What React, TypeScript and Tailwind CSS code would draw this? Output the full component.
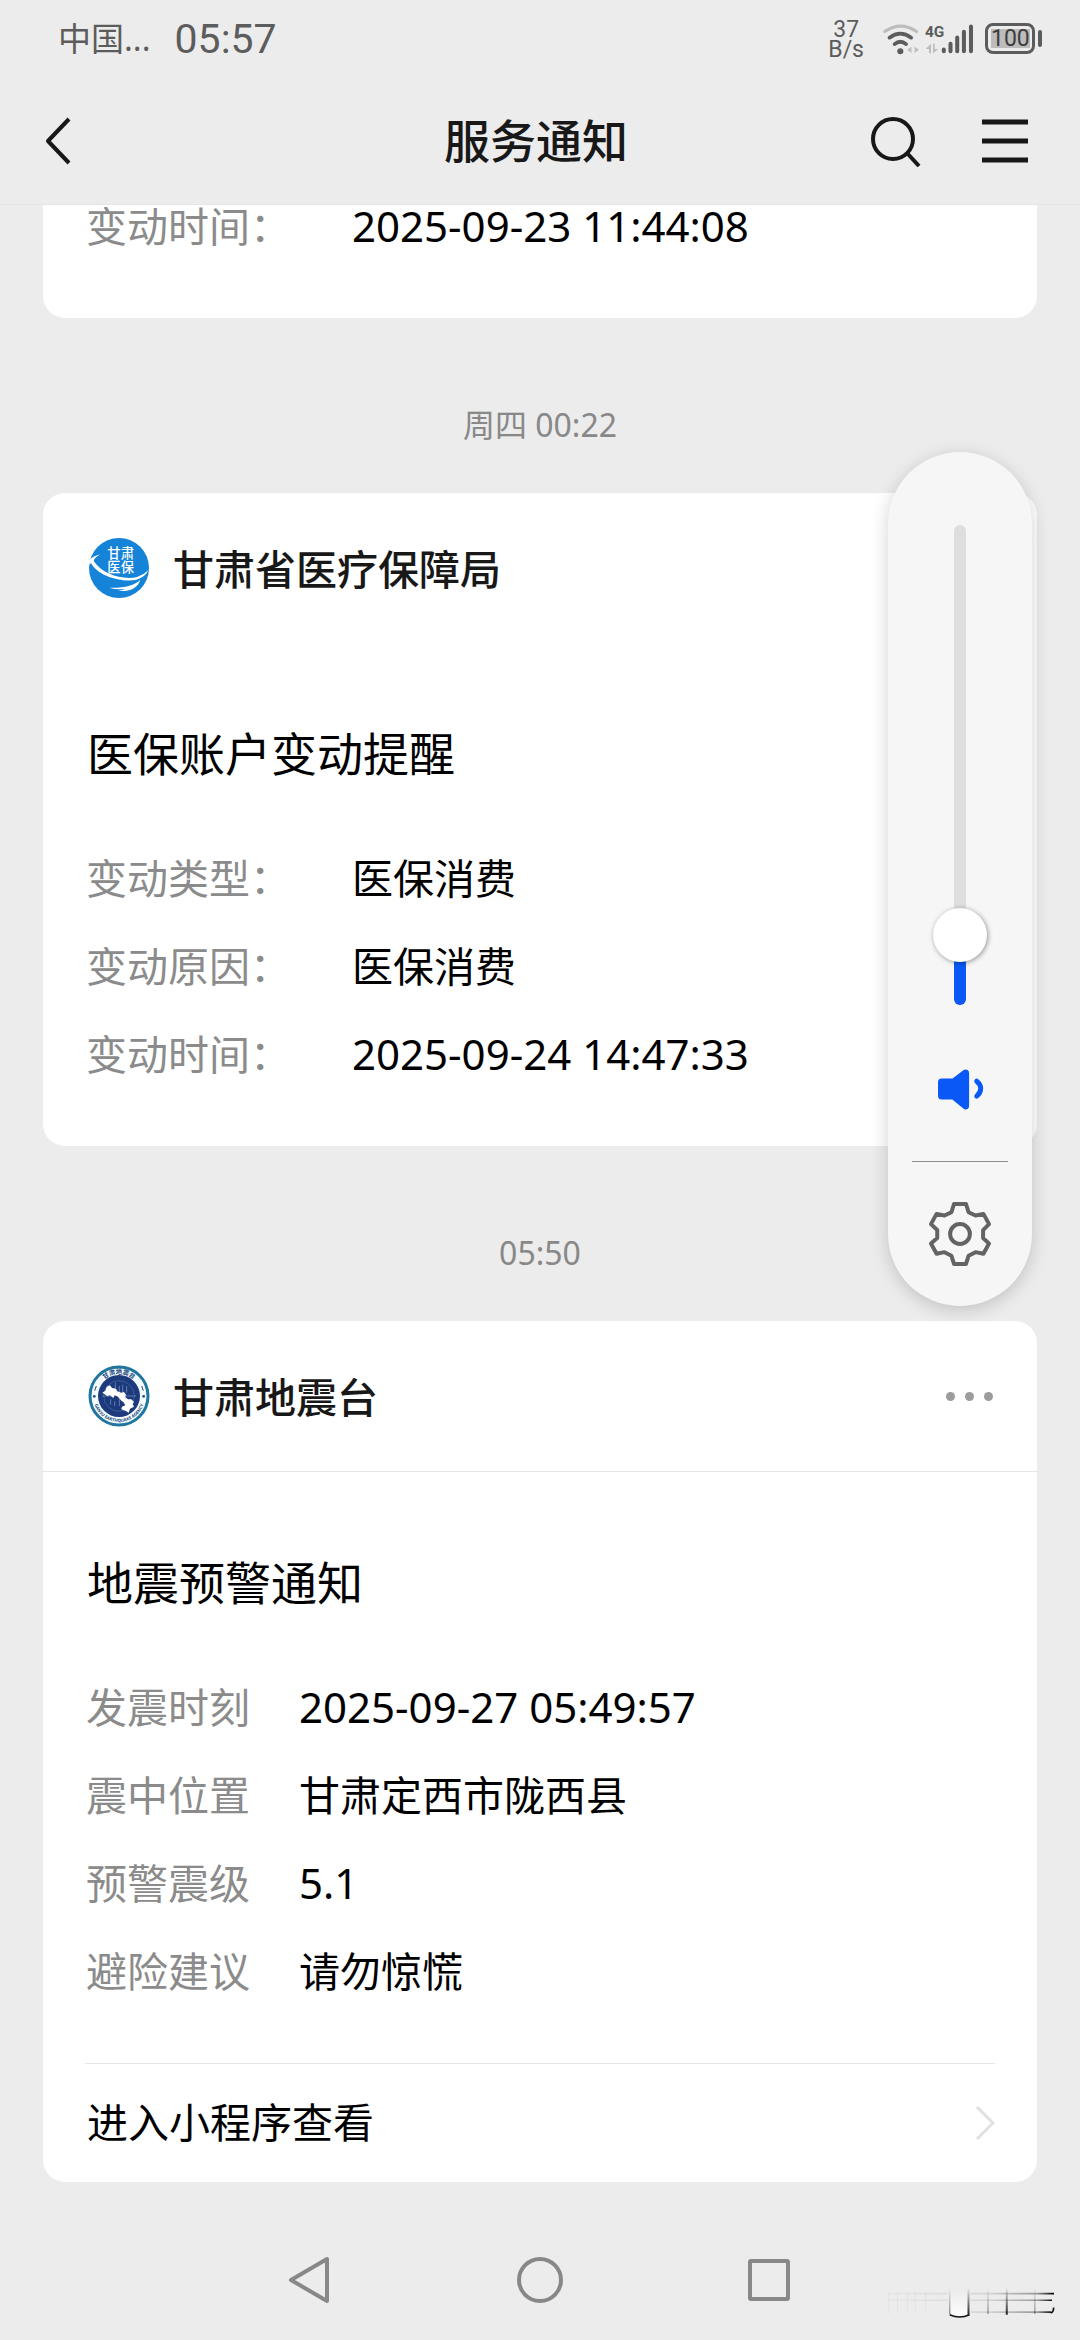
import { useState, type ReactNode } from "react";

type Field = { label: string; value: string; numeric?: boolean };

const sans = "font-['Noto_Sans','Noto_Sans_CJK_SC',sans-serif]";

function WifiIcon() {
  return (
    <svg viewBox="240 60 112 100" className="h-[34px] w-[38px]" fill="none" strokeLinecap="round" aria-label="Wi-Fi">
      <path d="M248 88Q295 56 342 88" stroke="#bdbdbd" strokeWidth="9" />
      <path d="M262 106Q294 82 326 106" stroke="#5c5c5c" strokeWidth="11" />
      <path d="M277 125Q294 111 311 125" stroke="#5c5c5c" strokeWidth="11" />
      <circle cx="294" cy="146" r="9" fill="#5c5c5c" />
      <path d="M327 133V151L314 142ZM336 133V151L349 142Z" fill="#bdbdbd" />
    </svg>
  );
}

function SignalIcon() {
  return (
    <svg viewBox="372 64 146 92" className="h-[31px] w-[49px] overflow-visible" strokeLinecap="round" aria-label="4G">
      <text x="372" y="106" fontSize="46" fontWeight="700" fill="#5c5c5c" fontFamily="Roboto, sans-serif">
        4G
      </text>
      <path d="M390 125V154H384V141H374ZM396 154V125H401V141H412Z" fill="#bdbdbd" />
      <g stroke="#5c5c5c" strokeWidth="12">
        <path d="M428 143V148M448 126V148M468 107V148M488 90V148M509 74V148" />
      </g>
    </svg>
  );
}

function Battery() {
  return (
    <div className="flex items-center gap-[3px]">
      <div className="flex h-[31px] w-[50px] rounded-[8px] border-[3px] border-[#5c5c5c] p-[3px]">
        <span className="flex flex-1 items-center justify-center bg-[#bcbcbc] font-[Roboto,sans-serif] text-[23px] leading-none text-[#3d3d3d]">
          100
        </span>
      </div>
      <div className="h-[17px] w-[4px] rounded-full bg-[#5c5c5c]" />
    </div>
  );
}

function StatusBar() {
  return (
    <div className="flex h-[77px] items-center justify-between pr-[38px] pl-[58px] text-[#5c5c5c]">
      <div className="flex items-center gap-[24px]">
        <span className="text-[33px]">中国...</span>
        <span className="pt-[2px] font-[Roboto,sans-serif] text-[41px]">05:57</span>
      </div>
      <div className="flex items-center">
        <div className="mr-[18px] pt-[2px] text-center font-[Roboto,sans-serif] text-[23px] leading-[20px]">
          37
          <br />
          B/s
        </div>
        <WifiIcon />
        <div className="ml-[5px]">
          <SignalIcon />
        </div>
        <div className="ml-[11px]">
          <Battery />
        </div>
      </div>
    </div>
  );
}

function TitleBar() {
  return (
    <div className="grid h-[127px] grid-cols-3 items-center pr-[52px] pl-[44px] text-[#181818]">
      <button aria-label="返回" className="justify-self-start">
        <svg viewBox="0 0 28 48" className="h-[48px] w-[28px]" fill="none" stroke="currentColor" strokeWidth="4">
          <path d="M25 2L4 24L25 46" strokeLinejoin="round" />
        </svg>
      </button>
      <h1 className="text-center text-[46px] font-medium">服务通知</h1>
      <div className="flex items-center justify-end gap-[60px]">
        <button aria-label="搜索">
          <svg viewBox="0 0 52 52" className="size-[52px]" fill="none" stroke="currentColor" strokeWidth="4">
            <circle cx="23" cy="24" r="20" />
            <path d="M37 38L49 51" />
          </svg>
        </button>
        <button aria-label="菜单">
          <svg viewBox="0 0 46 46" className="size-[46px]" fill="none" stroke="currentColor" strokeWidth="5">
            <path d="M0 4H46M0 23H46M0 42H46" />
          </svg>
        </button>
      </div>
    </div>
  );
}

function InsuranceLogo() {
  return (
    <svg viewBox="22 17 192 192" className="size-[64px]" aria-hidden="true">
      <circle cx="118" cy="113" r="90" fill="#1583d8" />
      <g fill="#fff">
        <text x="83" y="83" fontSize="40" fontWeight="500">甘肃</text>
        <text x="83" y="126" fontSize="40" fontWeight="500">医保</text>
        <path d="M28 90Q38 78 62 72Q44 82 42 92C68 132 130 150 172 140Q192 134 206 120Q196 142 168 149C120 156 54 136 34 98L30 104Z" />
        <path d="M88 172C130 174 164 166 182 148C174 174 150 184 116 182Q134 178 136 176Q108 178 88 172Z" />
      </g>
    </svg>
  );
}

function QuakeLogo() {
  return (
    <svg viewBox="21 26 192 192" className="size-[64px]" aria-hidden="true">
      <defs>
        <path id="arc-top" d="M51 122A66 66 0 0 1 183 122" />
        <path id="arc-bottom" d="M39 122A78 78 0 0 0 195 122" />
      </defs>
      <circle cx="117" cy="122" r="87" fill="#f4fbff" stroke="#20769f" strokeWidth="9" />
      <circle cx="117" cy="122" r="63" fill="#1c3a7c" />
      <circle cx="117" cy="122" r="46" fill="none" stroke="#4a6aa6" strokeWidth="2" />
      <path d="M66 122H96M138 122H168M106 82V108M118 92V152M128 88V112M140 92V112M92 132V148M104 138V152" stroke="#5f7cb4" strokeWidth="3" />
      <path
        d="M67 112L76 106L80 94L90 90L96 98L108 100L112 108L124 112L132 110L138 118L136 126L144 132L154 132L162 140L158 146L162 154L150 160L146 172L136 166L124 162L126 154L136 150L130 140L124 136L114 124L104 120L100 128L90 120L82 122Z"
        fill="#fff"
      />
      <g fill="#1d4a7c" textAnchor="middle" fontWeight="700">
        <text fontSize="19">
          <textPath href="#arc-top" startOffset="50%">甘肃地震台</textPath>
        </text>
        <text fontSize="13">
          <textPath href="#arc-bottom" startOffset="50%">GANSU EARTHQUAKE AGENCY</textPath>
        </text>
      </g>
      <path d="M49 92L44 106M185 92L190 106" stroke="#1d4a7c" strokeWidth="3" />
      <circle cx="43" cy="123" r="4" fill="#1d4a7c" />
      <circle cx="191" cy="123" r="4" fill="#1d4a7c" />
    </svg>
  );
}

function Fields({ items, gap }: { items: Field[]; gap: string }) {
  return (
    <dl className="px-[43px] pb-[48px] text-[41px] leading-[88px]">
      {items.map((item) => (
        <div key={item.label} className={`flex h-[88px] ${gap}`}>
          <dt className="text-[#8b8b8b]">{item.label}</dt>
          <dd className={item.numeric ? "text-[42px] text-black" : "text-black"}>{item.value}</dd>
        </div>
      ))}
    </dl>
  );
}

function CardHeader({ logo, name, children }: { logo: ReactNode; name: string; children?: ReactNode }) {
  return (
    <header className="flex h-[150px] items-center gap-[22px] px-[44px]">
      {logo}
      <h2 className="flex-1 pt-[4px] text-[41px] font-medium text-[#181818]">{name}</h2>
      {children}
    </header>
  );
}

function CardTitle({ children }: { children: ReactNode }) {
  return <h3 className="px-[44px] pt-[78px] pb-[49px] text-[46px] leading-[64px] text-black">{children}</h3>;
}

function Timestamp({ children }: { children: ReactNode }) {
  return <p className="flex h-[175px] items-center justify-center pt-[38px] text-[32px] text-[#888888]">{children}</p>;
}

function VolumePanel() {
  const [volume, setVolume] = useState(10);
  const filled = Math.round(((27 + (426 * volume) / 100) / 480) * 100);
  return (
    <aside className="absolute top-[452px] right-[48px] flex w-[144px] flex-col items-center rounded-[72px] bg-[#f6f6f6] pt-[73px] pb-[39px] shadow-[0_4px_18px_rgba(0,0,0,0.18)]">
      <div className="relative flex h-[480px] w-[54px] justify-center">
        <div className="flex w-[12px] flex-col justify-end overflow-hidden rounded-full bg-[#dedede]">
          <div className="bg-[#0a59f7]" style={{ height: `${filled}%` }} />
        </div>
        <input
          type="range"
          aria-label="音量"
          min={0}
          max={100}
          value={volume}
          onChange={(e) => setVolume(Number(e.target.value))}
          className="absolute inset-0 h-full w-full appearance-none bg-transparent [direction:rtl] [writing-mode:vertical-lr] [&::-webkit-slider-thumb]:size-[54px] [&::-webkit-slider-thumb]:appearance-none [&::-webkit-slider-thumb]:rounded-full [&::-webkit-slider-thumb]:bg-white [&::-webkit-slider-thumb]:shadow-[1px_1px_5px_rgba(0,0,0,0.4)]"
        />
      </div>
      <button aria-label="静音" className="mt-[63px]">
        <svg viewBox="230 566 142 128" className="h-[43px] w-[47px]" fill="none" stroke="#0a59f7" strokeLinecap="round" strokeLinejoin="round">
          <path
            d="M244 604H279L315 577Q320 575 320 580V680Q320 685 315 683L279 653H244Q240 653 240 649V608Q240 604 244 604Z"
            fill="#0a59f7"
            strokeWidth="14"
          />
          <path d="M350 605Q362 614 362 627Q362 640 350 650" strokeWidth="15" />
        </svg>
      </button>
      <hr className="mt-[50px] w-[96px] border-t border-[#8e8e8e]" />
      <button aria-label="设置" className="mt-[39px]">
        <svg viewBox="203 962 192 200" className="h-[66px] w-[64px]" fill="none" stroke="#636363" strokeWidth="12" strokeLinejoin="round">
          <path d="M281 971H317L325 996L346 1006L370 1001L387 1032L369 1050V1074L387 1091L370 1122L346 1117L325 1128L317 1153H281L273 1128L252 1117L228 1122L211 1091L230 1074V1050L211 1032L228 1001L252 1006L273 996Z" />
          <circle cx="299" cy="1062" r="30" />
        </svg>
      </button>
    </aside>
  );
}

function NavBar() {
  return (
    <nav className="relative grid h-[158px] grid-cols-3 justify-items-center px-[195px] pt-[73px] text-[#888888]">
      <button aria-label="返回" className="size-[50px]">
        <svg viewBox="0 0 50 50" fill="none" stroke="currentColor" strokeWidth="4" strokeLinejoin="round">
          <path d="M42 4V46L6 25Z" />
        </svg>
      </button>
      <button aria-label="主屏幕" className="size-[50px]">
        <svg viewBox="0 0 50 50" fill="none" stroke="currentColor" strokeWidth="4">
          <circle cx="25" cy="25" r="21" />
        </svg>
      </button>
      <button aria-label="最近任务" className="size-[50px]">
        <svg viewBox="0 0 50 50" fill="none" stroke="currentColor" strokeWidth="4" strokeLinejoin="round">
          <rect x="5" y="6" width="38" height="38" rx="1" />
        </svg>
      </button>
      <svg viewBox="60 50 530 100" className="absolute right-[23px] bottom-[20px] h-[33px] w-[177px]" fill="none" aria-hidden="true">
        <defs>
          <linearGradient id="streak" gradientUnits="userSpaceOnUse" x1="80" y1="0" x2="584" y2="0">
            <stop offset="0" stopColor="#000" stopOpacity="0.02" />
            <stop offset="0.6" stopColor="#000" stopOpacity="0.1" />
            <stop offset="0.9" stopColor="#000" stopOpacity="0.35" />
            <stop offset="1" stopColor="#000" />
          </linearGradient>
          <linearGradient id="stem" gradientUnits="userSpaceOnUse" x1="0" y1="52" x2="0" y2="134">
            <stop offset="0" stopColor="#000" stopOpacity="0" />
            <stop offset="1" stopColor="#000" stopOpacity="0.85" />
          </linearGradient>
          <linearGradient id="glow" gradientUnits="userSpaceOnUse" x1="0" y1="60" x2="0" y2="130">
            <stop offset="0" stopColor="#fff" stopOpacity="0" />
            <stop offset="1" stopColor="#fff" stopOpacity="0.8" />
          </linearGradient>
        </defs>
        <path d="M272 60H322V134Q298 142 272 134Z" fill="url(#glow)" />
        <path d="M80 70H262M332 70H584M80 90H262M332 90H578M332 126H575" stroke="url(#streak)" strokeWidth="5" />
        <path d="M268 54V132M384 54V132M526 54V132" stroke="url(#stem)" strokeWidth="4" opacity="0.5" />
        <path d="M325 54V134M441 54V134" stroke="url(#stem)" strokeWidth="6" />
        <path d="M268 134Q298 148 328 134" stroke="#111" strokeWidth="5" />
        <path d="M583 112Q583 126 574 129" stroke="#111" strokeWidth="5" />
        <path d="M84 66V130M110 66V130M140 66V130M164 66V130M195 66V130" stroke="#000" strokeOpacity="0.03" strokeWidth="4" />
      </svg>
    </nav>
  );
}

export default function App() {
  return (
    <div className={`relative flex min-h-screen flex-col bg-[#ececec] ${sans}`}>
      <div className="border-b border-[#e5e5e5]">
        <StatusBar />
        <TitleBar />
      </div>

      <main className="flex-1 overflow-hidden px-[43px]">
        <article className="-mt-[23px] rounded-[22px] bg-white">
          <Fields gap="gap-[61px]" items={[{ label: "变动时间：", value: "2025-09-23 11:44:08", numeric: true }]} />
        </article>

        <Timestamp>周四 00:22</Timestamp>

        <article className="rounded-[22px] bg-white">
          <CardHeader logo={<InsuranceLogo />} name="甘肃省医疗保障局" />
          <CardTitle>医保账户变动提醒</CardTitle>
          <Fields
            gap="gap-[61px]"
            items={[
              { label: "变动类型：", value: "医保消费" },
              { label: "变动原因：", value: "医保消费" },
              { label: "变动时间：", value: "2025-09-24 14:47:33", numeric: true },
            ]}
          />
        </article>

        <Timestamp>05:50</Timestamp>

        <article className="rounded-[22px] bg-white">
          <div className="h-[151px] border-b border-[#e6e6e6]">
            <CardHeader logo={<QuakeLogo />} name="甘肃地震台">
              <button aria-label="更多" className="flex gap-[10px]">
                <span className="size-[9px] rounded-full bg-[#9c9c9c]" />
                <span className="size-[9px] rounded-full bg-[#9c9c9c]" />
                <span className="size-[9px] rounded-full bg-[#9c9c9c]" />
              </button>
            </CardHeader>
          </div>
          <CardTitle>地震预警通知</CardTitle>
          <Fields
            gap="gap-[49px]"
            items={[
              { label: "发震时刻", value: "2025-09-27 05:49:57", numeric: true },
              { label: "震中位置", value: "甘肃定西市陇西县" },
              { label: "预警震级", value: "5.1", numeric: true },
              { label: "避险建议", value: "请勿惊慌" },
            ]}
          />
          <a
            href="#detail"
            className="mx-[42px] flex h-[119px] items-center justify-between border-t border-[#e6e6e6] pl-[2px] text-[41px] text-black"
          >
            进入小程序查看
            <svg viewBox="0 0 20 36" className="h-[36px] w-[20px]" fill="none" stroke="#e0e0e0" strokeWidth="3">
              <path d="M2 2L18 18L2 34" />
            </svg>
          </a>
        </article>
      </main>

      <NavBar />
      <VolumePanel />
    </div>
  );
}
